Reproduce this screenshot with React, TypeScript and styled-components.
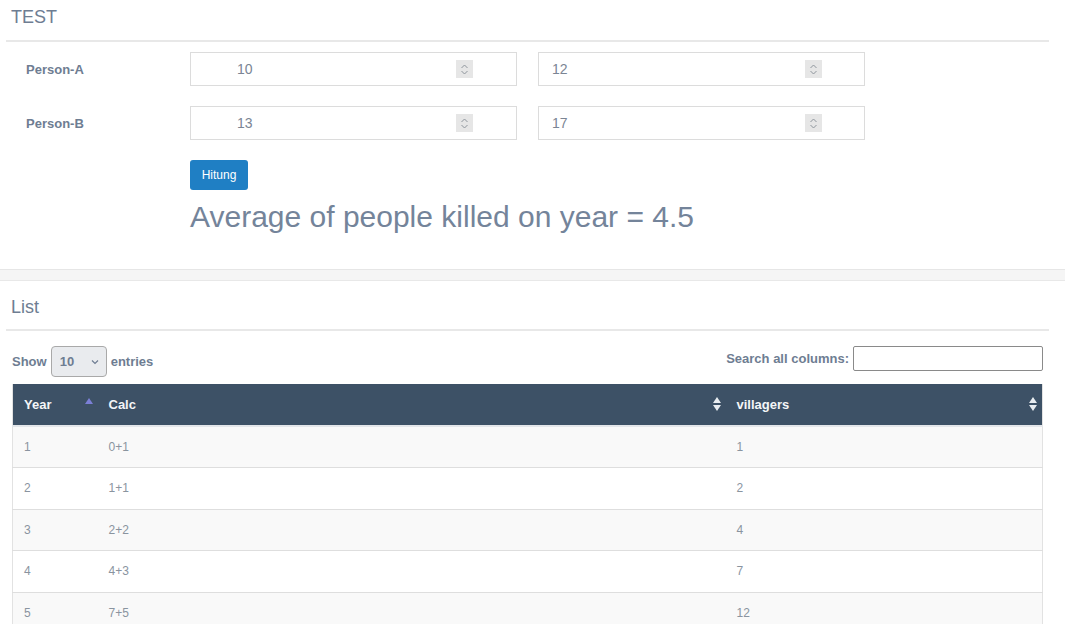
import React from "react";
import styled, { createGlobalStyle } from "styled-components";

const Global = createGlobalStyle`
  html, body { margin: 0; padding: 0; background: #fff; }
  body { font-family: "Liberation Sans", Arial, sans-serif; color: #6e7d92; }
  * { box-sizing: border-box; }
`;

const Page = styled.div`
  width: 1065px;
  display: flex;
  flex-direction: column;
`;

const Panel = styled.section<{ $top?: number; $height?: number }>`
  padding: ${(p) => p.$top ?? 0}px 16px 0 6px;
  background: #fff;
  ${(p) => (p.$height ? `height: ${p.$height}px;` : "")}
`;

const Gap = styled.div`
  height: 12px;
  background: #f5f5f5;
  border-top: 1px solid #e6e6e6;
  border-bottom: 1px solid #e8e8e8;
`;

const Title = styled.h2<{ $h: number; $pt: number }>`
  margin: 0;
  height: ${(p) => p.$h}px;
  padding: ${(p) => p.$pt}px 0 0 5px;
  font-size: 18px;
  font-weight: 400;
  line-height: 20px;
  color: #6e7d92;
  border-bottom: 2px solid #e8e8e8;
`;

const Form = styled.div`
  display: grid;
  grid-template-columns: 163px 327px 327px;
  column-gap: 21px;
  row-gap: 20px;
  padding-top: 10px;
  align-items: center;
`;

const Label = styled.label`
  padding-left: 20px;
  font-size: 13px;
  font-weight: 700;
  color: #6e7d92;
`;

const NumberBox = styled.div<{ $padLeft: number; $padRight: number }>`
  height: 34px;
  border: 1px solid #dcdcdc;
  display: flex;
  align-items: center;
  padding: 0 ${(p) => p.$padRight}px 0 ${(p) => p.$padLeft}px;
  background: #fff;
`;

const NumberInput = styled.input`
  flex: 1;
  min-width: 0;
  border: none;
  outline: none;
  font-family: "Liberation Sans", Arial, sans-serif;
  font-size: 14px;
  color: #7b8594;
  padding: 0;
  background: transparent;
`;

const Spinner = styled.span`
  width: 17px;
  height: 18px;
  background: #e6e6e6;
  display: flex;
  align-items: center;
  justify-content: center;
`;

const Actions = styled.div`
  grid-column: 2 / span 2;
  display: flex;
  flex-direction: column;
  align-items: flex-start;
`;

const Button = styled.button`
  height: 30px;
  width: 58px;
  background: #1f7fc4;
  color: #fff;
  border: none;
  border-radius: 3px;
  font-family: "Liberation Sans", Arial, sans-serif;
  font-size: 12px;
  padding: 0;
`;

const Result = styled.div`
  margin-top: 8px;
  font-size: 30px;
  line-height: 38px;
  color: #74849a;
  white-space: nowrap;
`;

const Toolbar = styled.div`
  display: flex;
  justify-content: space-between;
  align-items: flex-start;
  padding: 15px 6px 0 6px;
  height: 53px;
`;

const Inline = styled.label`
  display: flex;
  align-items: center;
  gap: 4px;
  font-size: 13px;
  font-weight: 700;
  color: #6e7d92;
`;

const Select = styled.div`
  width: 56px;
  height: 31px;
  border: 1px solid #a9a9a9;
  border-radius: 4px;
  background: #e9ebee;
  display: flex;
  align-items: center;
  justify-content: space-between;
  padding: 0 6px 0 8px;
  font-size: 13px;
  font-weight: 700;
  color: #6e7d92;
`;

const Search = styled.input`
  width: 190px;
  height: 25px;
  border: 1px solid #8a8a8a;
  border-radius: 2px;
  outline: none;
`;

const TableWrap = styled.div`
  padding: 0 6px;
`;

const Table = styled.table`
  width: 1031px;
  border-collapse: collapse;
  border-left: 1px solid #e2e2e2;
  border-right: 1px solid #e2e2e2;
  font-size: 12px;
`;

const Th = styled.th<{ $w?: number }>`
  ${(p) => (p.$w ? `width: ${p.$w}px;` : "")}
  height: 42px;
  background: #3d5166;
  color: #f4f6f8;
  font-weight: 700;
  font-size: 13px;
  text-align: left;
  padding: 0 11px;
  border-bottom: 2px solid #e3e6ea;
  position: relative;
`;

const SortIcon = styled.span`
  position: absolute;
  right: 4px;
  top: 12px;
  display: flex;
`;

const Tr = styled.tr<{ $odd: boolean }>`
  background: ${(p) => (p.$odd ? "#f9f9f9" : "#fff")};
`;

const Td = styled.td`
  height: 41.5px;
  padding: 0 11px;
  color: #8a949f;
  border-bottom: 1px solid #dedede;
`;

const Chevrons = () => (
  <svg width="9" height="13" viewBox="0 0 9 13">
    <path d="M1.5 5 L4.5 2 L7.5 5" fill="none" stroke="#8f969d" strokeWidth="1" />
    <path d="M1.5 8 L4.5 11 L7.5 8" fill="none" stroke="#8f969d" strokeWidth="1" />
  </svg>
);

const Both = () => (
  <svg width="10" height="16" viewBox="0 0 10 16">
    <path d="M5 1 L9 7 L1 7 Z" fill="#e8ecf0" />
    <path d="M5 15 L9 9 L1 9 Z" fill="#e8ecf0" />
  </svg>
);

const Up = () => (
  <svg width="10" height="16" viewBox="0 0 10 16">
    <path d="M5 2 L9 8 L1 8 Z" fill="#7b7fd6" />
  </svg>
);

const Down = () => (
  <svg width="10" height="8" viewBox="0 0 10 8">
    <path d="M2 2.5 L5 5.5 L8 2.5" fill="none" stroke="#6e7d92" strokeWidth="1.2" />
  </svg>
);

const NumField = ({ v, l, r }: { v: string; l: number; r: number }) => (
  <NumberBox $padLeft={l} $padRight={r}>
    <NumberInput defaultValue={v} />
    <Spinner>
      <Chevrons />
    </Spinner>
  </NumberBox>
);

const rows = [
  ["1", "0+1", "1"],
  ["2", "1+1", "2"],
  ["3", "2+2", "4"],
  ["4", "4+3", "7"],
  ["5", "7+5", "12"],
];

export default function App() {
  return (
    <Page>
      <Global />
      <Panel $height={269}>
        <Title $h={42} $pt={7}>TEST</Title>
        <Form>
          <Label>Person-A</Label>
          <NumField v="10" l={46} r={43} />
          <NumField v="12" l={13} r={42} />
          <Label>Person-B</Label>
          <NumField v="13" l={46} r={43} />
          <NumField v="17" l={13} r={42} />
          <Actions>
            <Button>Hitung</Button>
            <Result>Average of people killed on year = 4.5</Result>
          </Actions>
        </Form>
      </Panel>
      <Gap />
      <Panel $top={6}>
        <Title $h={44} $pt={10}>List</Title>
        <Toolbar>
          <Inline>
            Show
            <Select>
              <span>10</span>
              <Down />
            </Select>
            entries
          </Inline>
          <Inline>
            Search all columns:
            <Search />
          </Inline>
        </Toolbar>
        <TableWrap>
          <Table>
            <thead>
              <tr>
                <Th $w={85}>
                  Year
                  <SortIcon>
                    <Up />
                  </SortIcon>
                </Th>
                <Th $w={628}>
                  Calc
                  <SortIcon>
                    <Both />
                  </SortIcon>
                </Th>
                <Th>
                  villagers
                  <SortIcon>
                    <Both />
                  </SortIcon>
                </Th>
              </tr>
            </thead>
            <tbody>
              {rows.map((r, i) => (
                <Tr key={i} $odd={i % 2 === 0}>
                  <Td>{r[0]}</Td>
                  <Td>{r[1]}</Td>
                  <Td>{r[2]}</Td>
                </Tr>
              ))}
            </tbody>
          </Table>
        </TableWrap>
      </Panel>
    </Page>
  );
}
